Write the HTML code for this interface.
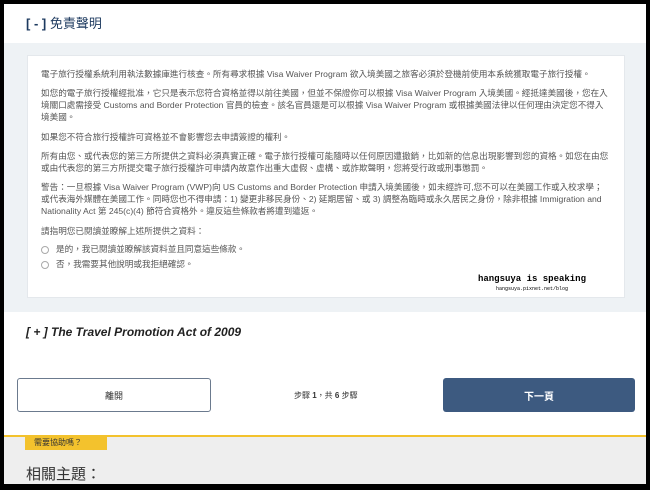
<!DOCTYPE html>
<html><head><meta charset="utf-8"><style>
*{margin:0;padding:0;box-sizing:border-box}
body{width:650px;height:490px;background:#000;position:relative;overflow:hidden;font-family:"Liberation Sans","Noto Sans CJK TC",sans-serif;color:#555}
.page{position:absolute;left:4px;top:4px;width:642px;height:480px;background:#fff;overflow:hidden}
.title{position:absolute;left:22px;top:9px;font-size:13px;color:#1d3a5f}
.title b{font-weight:bold}
.blue{position:absolute;left:0;top:39px;width:642px;height:269px;background:#eef2f5}
.box{position:absolute;left:23px;top:12px;width:598px;height:243px;background:#fff;border:1px solid #e4e8ec}
.txt{position:absolute;left:13px;top:13px;width:568px;font-size:8.6px;line-height:11.9px;color:#555}
.txt p{margin-bottom:7.5px}
.r{display:flex;align-items:center;height:15px}
.r i{display:inline-block;width:8px;height:8px;border:1px solid #aaa;border-radius:50%;margin-right:7px;margin-left:0}
.wm{position:absolute;right:38px;top:218px;font-family:"Liberation Mono",monospace;font-size:9px;font-weight:bold;color:#000;text-align:center;line-height:10px}
.wm small{font-size:5px;display:block;font-weight:normal}
.h2{position:absolute;left:22px;top:321px;font-size:12px;font-weight:bold;font-style:italic;color:#222}
.btn{position:absolute;top:374px;height:34px;border-radius:3px;font-size:9px;display:flex;align-items:center;justify-content:center}
.b1{left:13px;width:194px;border:1px solid #6b7a8e;color:#333;background:#fff}
.b2{left:439px;width:192px;background:#3d5a80;color:#fff;font-weight:bold;font-size:10px}
.step{position:absolute;left:290px;top:386px;font-size:8px;color:#333}
.foot{position:absolute;left:0;top:431px;width:642px;height:60px;background:#eeeeee;border-top:2px solid #f3c22d}
.tag{position:absolute;left:21px;top:0;width:82px;height:13px;background:#f3c22d;font-size:8px;color:#333;padding-left:9px;line-height:12px}
.rel{position:absolute;left:22px;top:26px;font-size:15px;color:#333}
</style></head><body><div class="page">
<div class="title"><b>[ - ]</b> 免責聲明</div>
<div class="blue"><div class="box"><div class="txt">
<p>電子旅行授權系統利用執法數據庫進行核查。所有尋求根據 Visa Waiver Program 欲入境美國之旅客必須於登機前使用本系統獲取電子旅行授權。</p>
<p>如您的電子旅行授權經批准，它只是表示您符合資格並得以前往美國，但並不保證你可以根據 Visa Waiver Program 入境美國。經抵達美國後，您在入境關口處需接受 Customs and Border Protection 官員的檢查。該名官員還是可以根據 Visa Waiver Program 或根據美國法律以任何理由決定您不得入境美國。</p>
<p>如果您不符合旅行授權許可資格並不會影響您去申請簽證的權利。</p>
<p>所有由您、或代表您的第三方所提供之資料必須真實正確。電子旅行授權可能隨時以任何原因遭撤銷，比如新的信息出現影響到您的資格。如您在由您或由代表您的第三方所提交電子旅行授權許可申請內故意作出重大虛假、虛構、或詐欺聲明，您將受行政或刑事懲罰。</p>
<p>警告：一旦根據 Visa Waiver Program (VWP)向 US Customs and Border Protection 申請入境美國後，如未經許可,您不可以在美國工作或入校求學；或代表海外媒體在美國工作。同時您也不得申請：1) 變更非移民身份、2) 延期居留、或 3) 調整為臨時或永久居民之身份，除非根據 Immigration and Nationality Act 第 245(c)(4) 節符合資格外。違反這些條款者將遭到遣返。</p>
<p style="margin-bottom:5px">請指明您已閱讀並瞭解上述所提供之資料：</p>
<div class="r"><i></i>是的，我已閱讀並瞭解該資料並且同意這些條款。</div>
<div class="r"><i></i>否，我需要其他說明或我拒絕確認。</div>
</div><div class="wm">hangsuya is speaking<small>hangsuya.pixnet.net/blog</small></div></div></div>
<div class="h2">[ + ] The Travel Promotion Act of 2009</div>
<div class="btn b1">離開</div>
<div class="step">步驟 <b>1</b>，共 <b>6</b> 步驟</div>
<div class="btn b2">下一頁</div>
<div class="foot"><div class="tag">需要協助嗎？</div><div class="rel">相關主題：</div></div>
</div></body></html>
